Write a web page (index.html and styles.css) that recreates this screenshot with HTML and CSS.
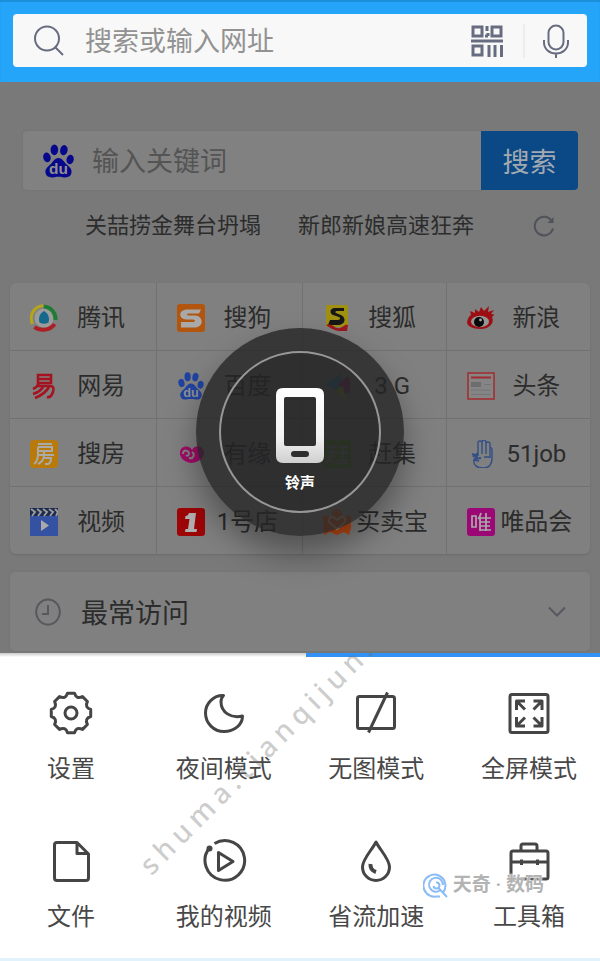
FILE: index.html
```html
<!DOCTYPE html>
<html lang="zh-CN">
<head>
<meta charset="utf-8">
<meta name="viewport" content="width=device-width, initial-scale=1">
<title>浏览器</title>
<link rel="stylesheet" href="styles.css">
</head>
<body>
<div class="page">
  <header class="topbar">
    <form class="address">
      <svg class="i-search" viewBox="0 0 32 32" aria-hidden="true"><circle cx="14" cy="13.500" r="12"/><path d="M22.500 22.500L30 30"/></svg>
      <input type="text" class="address-input" placeholder="搜索或输入网址" aria-label="搜索或输入网址">
      <button type="button" class="icon-btn" aria-label="扫码">
        <svg class="i-scan" viewBox="0 0 32 32"><path d="M2 2h9v9H2zM21 2h9v9h-9zM2 21h9v9H2z"/><path d="M0 16h32M16 1v5M17 8v3M14 11h3M18 20v12M24 20v12M30.500 20v12"/></svg>
      </button>
      <span class="divider"></span>
      <button type="button" class="icon-btn" aria-label="语音">
        <svg class="i-mic" viewBox="0 0 26 34"><rect x="5.500" y="1.500" width="15" height="24" rx="7.500"/><path d="M1 16v2.500C1 25 6.500 29.500 13 29.500S25 25 25 18.500V16M13 29.500V34"/></svg>
      </button>
    </form>
  </header>

  <main class="home">
    <form class="search">
      <label class="search-box">
        <svg class="i-paw" viewBox="0 0 30 33" aria-hidden="true"><ellipse cx="3.800" cy="13" rx="3.600" ry="4.800" transform="rotate(-12 3.8 13)"/><ellipse cx="11" cy="5.600" rx="3.700" ry="5.200"/><ellipse cx="20.200" cy="6" rx="3.600" ry="5" transform="rotate(12 20.2 6)"/><ellipse cx="26.300" cy="15" rx="3.500" ry="4.600" transform="rotate(12 26.3 15)"/><path d="M15 13.500C19 13.500 20.500 17.500 23 20C26 22.500 28.500 25 27.500 28.500C26.500 32.500 22.500 32.800 19 32.200C16 31.700 14 31.700 11 32.200C7.500 32.800 3.500 32.500 2.500 28.500C1.600 25 4 22.500 7 20C9.500 17.500 11 13.500 15 13.500Z"/><text x="15" y="29.500" text-anchor="middle" class="paw-text">du</text></svg>
        <input type="text" class="search-input" placeholder="输入关键词" aria-label="输入关键词">
      </label>
      <button type="button" class="search-btn">搜索</button>
    </form>

    <div class="news">
      <a href="#">关喆捞金舞台坍塌</a>
      <a href="#">新郎新娘高速狂奔</a>
      <button type="button" class="refresh" aria-label="刷新">
        <svg viewBox="0 0 22 22"><path d="M20 13.500A9.300 9.300 0 1 1 18.500 5.500"/><path class="tip" d="M20.500 2v6h-6z"/></svg>
      </button>
    </div>

    <nav class="sites">
      <a href="#"><svg viewBox="0 0 28 28"><circle cx="14" cy="14" r="9.500" fill="#9b9b9b"/><path d="M2.500 20C-1 12 3 3 13 1.500" fill="none" stroke="#b5a617" stroke-width="3"/><path d="M14 2.500C22 3.500 26 10 25.500 16" fill="none" stroke="#1f7b35" stroke-width="4"/><path d="M4.500 23C11 28 21 26 24.500 20" fill="none" stroke="#ac1f24" stroke-width="4"/><path d="M14 7C18 9 20 14 18.500 18.500Q14 21 9.500 18.500C8 14 10 9 14 7Z" fill="#14688c"/></svg><span>腾讯</span></a>
      <a href="#"><svg viewBox="0 0 28 28"><rect width="28" height="28" rx="3" fill="#b2550f"/><path d="M24 5.500H10.500C1 5.500 1 15 9.500 15.500H16C18.500 16 18.500 18 16 18H4V23.500H17.500C27 23.500 27 12.500 18.500 11.500H11.500C9.500 11.500 9.500 9.500 11.500 9.500H22Z" fill="#a9a9a9"/></svg><span>搜狗</span></a>
      <a href="#"><svg viewBox="0 0 28 28"><rect x="3" y="1" width="22" height="22" rx="1" fill="#a09012"/><path d="M21 4H12C7 4 6 9 10 11L16 13C18 14.500 17 16 14 16H7L5 21H15C22 21 24 14 18 11L13 9C11.500 8 12.500 7 14 7H21Z" fill="#161616"/><path d="M3 21C9 18 12 26 17 24S22 20 25 21L24 27H16Q9 26 3 21Z" fill="#9c1820"/></svg><span>搜狐</span></a>
      <a href="#"><svg viewBox="0 0 28 28"><path d="M0 18C1 14 2 12 4 11L3 7L8 9L8 5L12 8L14 3L17 7L22 2L21 8L27 6L24 10L27.500 10.500L25 13C28 19 22 25 14 25C5 25 0 22 0 18Z" fill="#9d0e12"/><ellipse cx="13" cy="17.500" rx="9" ry="5.700" fill="#969696"/><circle cx="12" cy="18" r="5" fill="#090909"/><circle cx="13.500" cy="16" r="1.400" fill="#aaa"/></svg><span>新浪</span></a>

      <a href="#"><svg viewBox="0 0 28 28" fill="none" stroke="#a4131f" stroke-width="2.600"><path d="M8 3H21V11H8ZM8 7H21M9 10Q8 15 3 17M6 14H20Q25 14 23 20Q21 26 17 25M13 15Q10 20 3 22M19 15Q15 22 5 26"/></svg><span>网易</span></a>
      <a href="#"><svg class="paw-blue" viewBox="0 0 30 33"><ellipse cx="3.800" cy="13" rx="3.600" ry="4.800" transform="rotate(-12 3.8 13)"/><ellipse cx="11" cy="5.600" rx="3.700" ry="5.200"/><ellipse cx="20.200" cy="6" rx="3.600" ry="5" transform="rotate(12 20.2 6)"/><ellipse cx="26.300" cy="15" rx="3.500" ry="4.600" transform="rotate(12 26.3 15)"/><path d="M15 13.500C19 13.500 20.500 17.500 23 20C26 22.500 28.500 25 27.500 28.500C26.500 32.500 22.500 32.800 19 32.200C16 31.700 14 31.700 11 32.200C7.500 32.800 3.500 32.500 2.500 28.500C1.600 25 4 22.500 7 20C9.500 17.500 11 13.500 15 13.500Z"/><text x="15" y="29.500" text-anchor="middle" class="paw-text">du</text></svg><span>百度</span></a>
      <a href="#"><svg viewBox="0 0 28 28"><path d="M2 12L18 1V12L16 20Z" fill="#2b87ab"/><path d="M15 12L24 5Q27 6 27 9V20L23 22Z" fill="#a3206f"/><path d="M12 18L20 14L22 27Z" fill="#8fb022"/></svg><span>3 G</span></a>
      <a href="#"><svg viewBox="0 0 28 28"><path d="M1 1H27V27H1Z" fill="#858585" stroke="#a22b2f" stroke-width="1.500"/><path d="M4 5.500H24" stroke="#a22b2f" stroke-width="2"/><path d="M4 10H14V15H4Z" fill="#6d6d6d"/><path d="M17 12.500H24M4 18H24M4 22.500H24" stroke="#757575"/></svg><span>头条</span></a>

      <a href="#"><svg viewBox="0 0 28 28"><rect width="28" height="28" rx="4" fill="#b87b0b"/><g fill="none" stroke="#aaa" stroke-width="2"><path d="M8 4H22M8 7H22V11H7M8 7V14Q8 21 4 24M14 11V14M9 15H24M14 15Q14 21 8 24M14 18H21Q21 23 18 24H15"/></g></svg><span>搜房</span></a>
      <a href="#"><svg viewBox="0 0 28 28"><path d="M14 23C8 22 2 18 3 12C4 5 13 5 15 10C19 3 28 7 27 14C26 20 18 23 14 23Z" fill="#a20c68"/><path d="M6 14C6 9 12 10 12 14Q11 17 9 15M12 18C17 19 18 14 15 12" fill="none" stroke="#858585" stroke-width="2"/></svg><span>有缘</span></a>
      <a href="#"><svg viewBox="0 0 28 28"><rect width="28" height="28" fill="#4f8f22"/><path d="M4 7H13M8.500 4V12M4 12H13M9 12V21M6 15Q6 21 3 23M6 20Q8 23 24 23M9 16H13M15 7H25M20 7V20M15 13H25M15 20H25" fill="none" stroke="#909090" stroke-width="2"/></svg><span>赶集</span></a>
      <a href="#"><svg viewBox="0 0 28 28" fill="none" stroke="#334e86" stroke-width="1.400"><path d="M11 16V3Q11 1 13 1T15 3V14M15 3Q15 0 17 0T19 3V14M19 4Q19 2 21 2T23 4V18M23 8Q25 7 25 10V18C25 24 22 28 16 28C10 28 6 25 7 20L12 21M17 17H23"/><path d="M5 14L10 16L8 19L14 18M6 17L11 13" stroke-width="2"/></svg><span>51job</span></a>

      <a href="#"><svg viewBox="0 0 28 28"><rect width="28" height="28" fill="#3552a2"/><path d="M0 0H28V8H0Z" fill="#1d2a50"/><path d="M1 1L5 4L2 8M7 1L11 4L8 8M13 1L17 4L14 8M19 1L23 4L20 8M25 1L28 4L26 8" fill="none" stroke="#999" stroke-width="2"/><path d="M11 12L19 17.500L11 23Z" fill="#aaa"/></svg><span>视频</span></a>
      <a href="#"><svg viewBox="0 0 28 28"><rect width="28" height="28" rx="3" fill="#9d0507"/><path d="M12 5H19L17 21H20L19.500 24H8L8.500 21H11L12.500 11H8L8.500 8Q11 8 12 5Z" fill="#b0b0b0"/></svg><span>1号店</span></a>
      <a href="#"><svg viewBox="0 0 28 28"><path d="M0 8H8Q9 1 14 1T20 8H28V20L26 27L21 24L14 27L7 24L1 27Z" fill="#c04a14"/><path d="M10 8Q11 3 14 3T18 8" fill="none" stroke="#777"/><path d="M14 21L6 14Q6 8 10 9L14 12L18 9Q23 8 22 14Z" fill="none" stroke="#aaa08a" stroke-width="2"/></svg><span>买卖宝</span></a>
      <a href="#"><svg viewBox="0 0 28 28"><rect width="28" height="28" rx="3" fill="#9b0876"/><g fill="none" stroke="#aaa" stroke-width="1.700"><path d="M5 8H9V19H5ZM14 5Q13 9 11 11M13 9V23M13 10H24M19 5V23M13 14H23M13 18H23M13 22H24"/></g></svg><span>唯品会</span></a>
    </nav>

    <button type="button" class="visited">
      <svg class="i-clock" viewBox="0 0 26 28" aria-hidden="true"><ellipse cx="13" cy="14" rx="11.800" ry="12.500"/><path d="M13 7V16H7"/></svg>
      <span>最常访问</span>
      <svg class="i-down" viewBox="0 0 18 12" aria-hidden="true"><path d="M1 1.500L9 9.500L17 1.500"/></svg>
    </button>
  </main>

  <section class="menu">
    <div class="tab-line"></div>
    <div class="menu-grid">
      <button type="button"><svg viewBox="0 0 48 48"><path d="M20.500 4.300H27.500Q29.500 10.600 35.500 7.600L40.400 12.500Q37.400 18.500 43.700 20.500V27.500Q37.400 29.500 40.400 35.500L35.500 40.400Q29.500 37.400 27.500 43.700H20.500Q18.500 37.400 12.500 40.400L7.600 35.500Q10.600 29.500 4.300 27.500V20.500Q10.600 18.500 7.600 12.500L12.500 7.600Q18.500 10.600 20.500 4.300Z"/><circle cx="24" cy="24" r="6"/></svg><span>设置</span></button>
      <button type="button"><svg viewBox="0 0 48 48"><path d="M23.500 6.500C14 6 5.500 14 5.500 24A18.500 18.500 0 0 0 24 42.500C34 42.500 42.500 36 42.500 27C31 30 21 23 21 13Q21 9 23.500 6.500Z"/></svg><span>夜间模式</span></button>
      <button type="button"><svg viewBox="0 0 48 48"><rect x="5.500" y="7.500" width="37" height="32" rx="2"/><path d="M35.500 3.500L16.500 43.500"/></svg><span>无图模式</span></button>
      <button type="button"><svg viewBox="0 0 48 48"><rect x="5" y="5.500" width="38" height="38" rx="2"/><path d="M20 12H11.500V21M12 12.500L20 20.500M28.500 12H37V21M36.500 12.500L28.500 20.500M20 37H11.500V28M12 36.500L20 28.500M28.500 37H37V28M36.500 36.500L28.500 28.500"/></svg><span>全屏模式</span></button>
      <button type="button"><svg viewBox="0 0 48 48"><path d="M10 5.500H30L41.500 17V41Q41.500 43.500 39 43.500H10Q7.500 43.500 7.500 41V8Q7.500 5.500 10 5.500ZM30 6V16.500H41"/></svg><span>文件</span></button>
      <button type="button"><svg viewBox="0 0 48 48"><path d="M14.500 6.500A19.800 19.800 0 1 1 9 11.500"/><circle class="dot" cx="9.500" cy="11.500" r="3"/><path d="M18.500 15.500V33.500L33 24.500Z"/></svg><span>我的视频</span></button>
      <button type="button"><svg viewBox="0 0 48 48"><path d="M24 5C20 13 10.500 22 10.500 30A13.500 13.500 0 0 0 37.500 30C37.500 22 28 13 24 5Z"/><path d="M18.500 27Q18 33 24 35" stroke-width="4"/></svg><span>省流加速</span></button>
      <button type="button"><svg viewBox="0 0 48 48"><rect x="6" y="14" width="37" height="28" rx="2"/><path d="M16 14V9Q16 7 18 7H30Q32 7 32 9V14M6 25H43M16.500 22.500V28M32.500 22.500V28"/></svg><span>工具箱</span></button>
    </div>
    <span class="mark-diagonal">shuma.tianqijun.</span>
    <div class="mark-brand">
      <svg viewBox="0 0 26 26" aria-hidden="true"><path d="M20 20.500A11 11 0 1 0 13 24.500H17"/><path d="M17 18.500A7 7 0 1 1 20 13"/><path d="M13 10.500A3 3 0 1 1 10.500 14M15.500 16L24 25"/></svg>
      <span>天奇 · 数码</span>
    </div>
  </section>

  <div class="toast" role="status">
    <svg class="i-phone" viewBox="0 0 50 78" aria-hidden="true">
      <defs><linearGradient id="shell" x1="0" y1="0" x2="0" y2="1"><stop offset="0" stop-color="#fff"/><stop offset=".65" stop-color="#f2f2f2"/><stop offset="1" stop-color="#cfcfcf"/></linearGradient></defs>
      <path fill="url(#shell)" fill-rule="evenodd" d="M8 1H42Q49 1 49 8V69Q49 76 42 76H8Q1 76 1 69V8Q1 1 8 1ZM11 10Q9 10 9 12V57Q9 59 11 59H39Q41 59 41 57V12Q41 10 39 10ZM19 64Q16 64 16 67T19 70H31Q34 70 34 67T31 64Z"/>
    </svg>
    <span>铃声</span>
  </div>
</div>
</body>
</html>
```
FILE: styles.css
```css
* { box-sizing: border-box; }
body {
  margin: 0;
  background: #fff;
  color: #2c2c2c;
  font-family: Roboto, "Noto Sans CJK SC", sans-serif;
}
a { color: inherit; text-decoration: none; }
button, input {
  margin: 0;
  padding: 0;
  border: 0;
  background: none;
  color: inherit;
  font: inherit;
}
svg { display: block; flex: none; }
.page { position: relative; }

.topbar {
  padding: 14px 13px 15px;
  background: #25a5f9;
  box-shadow: inset 0 2px 1px #1c8fd8;
}
.address {
  display: flex;
  align-items: center;
  height: 53px;
  padding: 0 18px 0 20px;
  border-radius: 4px;
  background: #f8f8f8;
}
.address svg { fill: none; stroke: #686c80; stroke-width: 2; }
.address .i-search { width: 32px; height: 32px; }
.address .i-scan { width: 32px; height: 32px; stroke-width: 3; }
.address .i-mic { width: 26px; height: 34px; }
.address-input,
.search-input {
  flex: 1;
  min-width: 0;
  padding-top: 2px;
  font-size: 27px;
  line-height: 40px;
}
.address-input { margin-left: 20px; }
.address-input::placeholder { color: #929292; opacity: 1; }
.divider {
  width: 2px;
  height: 34px;
  margin: 0 18px 0 20px;
  background: #ededed;
}

.home { padding: 49px 10px 2px; background: #797979; }
.search { display: flex; height: 59px; margin: 0 12px 0 13px; }
.search-box {
  flex: 1;
  min-width: 0;
  display: flex;
  align-items: center;
  padding-left: 20px;
  border-radius: 4px 0 0 4px;
  background: #818181;
  box-shadow: 0 0 2px #6e6e6e;
}
.i-paw { width: 31px; height: 34px; fill: #08088c; }
.paw-text { fill: #909090; font: bold 15px "Liberation Sans", sans-serif; }
.paw-blue { fill: #2043a0; }
.search-input { margin-left: 18px; }
.search-input::placeholder { color: #545454; opacity: 1; }
.search-btn {
  width: 97px;
  border-radius: 0 4px 4px 0;
  background: #0a4886;
  color: #a2a9b0;
  font-size: 27px;
}
.news {
  display: flex;
  align-items: center;
  gap: 37px;
  margin: 20px 35px 41px 75px;
  font-size: 22px;
  line-height: 32px;
  white-space: nowrap;
}
.refresh { margin-left: auto; }
.refresh svg { width: 22px; height: 22px; fill: none; stroke: #50525a; stroke-width: 2; }
.refresh .tip { fill: #50525a; stroke: none; }

.sites {
  display: grid;
  grid-template-columns: 146fr 144fr 143fr 143fr;
  gap: 1px;
  overflow: hidden;
  border-radius: 6px;
  background: #717171;
  box-shadow: 0 1px 2px #6c6c6c;
}
.sites a {
  display: flex;
  align-items: center;
  gap: 4px;
  height: 67px;
  padding: 2px 16px 0 20px;
  background: #808080;
  font-size: 24px;
  line-height: 32px;
  white-space: nowrap;
}
.sites svg { width: 28px; height: 28px; }
.sites span { flex: 1; text-align: center; }

.visited {
  display: flex;
  align-items: center;
  width: 100%;
  height: 79px;
  margin-top: 18px;
  padding: 0 24px 0 25px;
  border-radius: 5px;
  background: #808080;
  box-shadow: 0 0 2px #707070;
  font-size: 27px;
}
.visited svg { fill: none; stroke: #56575f; stroke-width: 2; }
.visited .i-clock { width: 26px; height: 28px; }
.visited span { margin-left: 20px; }
.visited .i-down { width: 18px; height: 12px; margin-left: auto; }

.menu {
  position: relative;
  border-bottom: 3px solid #e1f2fd;
  background: #fff;
}
.tab-line {
  height: 4px;
  background: linear-gradient(#c9c9c9, #fff);
}
.tab-line::after {
  content: "";
  display: block;
  width: 49%;
  height: 4px;
  margin-left: auto;
  background: #3191f5;
}
.menu-grid {
  display: grid;
  grid-template-columns: repeat(4, 96px);
  justify-content: space-between;
  row-gap: 54px;
  padding: 32px 23px 27px;
}
.menu-grid button {
  display: flex;
  flex-direction: column;
  align-items: center;
  gap: 18px;
  color: #484848;
  font-size: 24px;
  line-height: 28px;
  white-space: nowrap;
}
.menu-grid svg { width: 48px; height: 48px; fill: none; stroke: #454545; stroke-width: 3; stroke-linejoin: round; }
.menu-grid .dot { fill: #454545; stroke: none; }
.mark-diagonal {
  position: absolute;
  left: 155px;
  bottom: 78px;
  color: rgba(110, 110, 110, .36);
  font: 500 28px/32px "Noto Sans", sans-serif;
  letter-spacing: 6px;
  transform: rotate(-45deg);
  transform-origin: 0 100%;
  pointer-events: none;
}
.mark-brand {
  position: absolute;
  right: 56px;
  bottom: 60px;
  display: flex;
  align-items: center;
  gap: 4px;
  color: #b3b3b3;
  font-size: 19px;
  font-weight: 700;
  line-height: 26px;
  text-shadow: 0 0 2px #fff, 0 0 2px #fff;
  pointer-events: none;
}
.mark-brand svg { width: 26px; height: 26px; fill: none; stroke: #8bbcf5; stroke-width: 2; }

.toast {
  position: absolute;
  top: 328px;
  left: 50%;
  display: flex;
  flex-direction: column;
  align-items: center;
  gap: 8px;
  width: 208px;
  height: 208px;
  margin-left: -104px;
  padding-top: 59px;
  border-radius: 50%;
  background: rgba(36, 36, 38, .8);
  box-shadow: 0 18px 32px rgba(0, 0, 0, .36);
  color: #fff;
  font-size: 15px;
  font-weight: 700;
  line-height: 20px;
}
.toast::before {
  content: "";
  position: absolute;
  inset: 23px;
  border: 2px solid #979797;
  border-radius: 50%;
  background: rgba(36, 36, 38, .4);
}
.toast svg, .toast span { position: relative; }
.i-phone { width: 50px; height: 78px; }
```
